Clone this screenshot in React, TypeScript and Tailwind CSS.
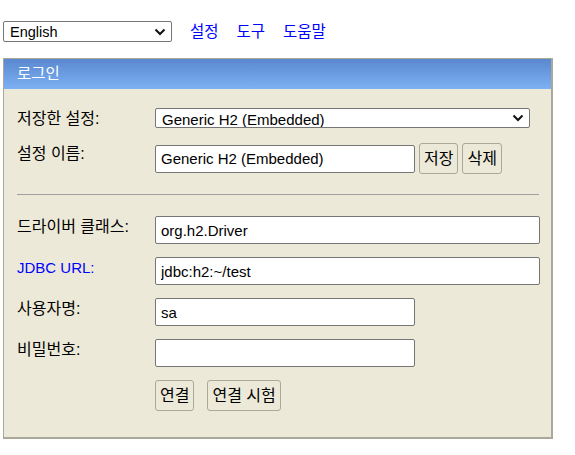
// H2 콘솔 로그인 화면 — 상단 언어/메뉴 + 로그인 패널
import React from "react";

const FONT = { fontFamily: '"Liberation Sans", Arial, "Noto Sans CJK KR", sans-serif' };

function Chevron() {
  return (
    <svg width="12" height="8" viewBox="0 0 12 8" className="pointer-events-none absolute right-[6px] top-1/2 -translate-y-1/2">
      <path d="M1.5 1.5 L6 6 L10.5 1.5" fill="none" stroke="#111" strokeWidth="2" />
    </svg>
  );
}

function Select({ value, className }: { value: string; className: string }) {
  return (
    <div className={`relative ${className}`}>
      <select
        defaultValue={value}
        className="h-full w-full appearance-none rounded-[2px] border border-[#767676] bg-white pl-[6px] text-black outline-none"
      >
        <option>{value}</option>
      </select>
      <Chevron />
    </div>
  );
}

function TextInput({ value = "", wide = false }: { value?: string; wide?: boolean }) {
  return (
    <input
      defaultValue={value}
      className={`h-[28px] shrink-0 ${wide ? "w-[385px]" : "w-[260px]"} rounded-[2px] border border-[#767676] bg-white px-[5px] text-[15px] text-black outline-none`}
    />
  );
}

function Btn({ children }: { children: React.ReactNode }) {
  return (
    <button className="h-[31px] shrink-0 rounded-[3px] border border-[#aca899] bg-[#ece9d8] px-[4px] text-[16px] text-black">
      {children}
    </button>
  );
}

function Row({ label, blue = false, children }: { label: string; blue?: boolean; children: React.ReactNode }) {
  return (
    <div className="flex items-start">
      <div
        className={`w-[138px] shrink-0 leading-[22px] ${blue ? "text-[15px] text-[#0000ff]" : "text-[16px] text-black"}`}
      >
        {label}
      </div>
      <div className="flex items-center">{children}</div>
    </div>
  );
}

export default function App() {
  return (
    <div className="min-h-[455px] bg-white pl-[3px] pt-[21px]" style={FONT}>
      {/* 상단: 언어 선택 + 메뉴 */}
      <div className="flex h-[21px] items-center">
        <Select value="English" className="h-[21px] w-[169px] text-[14.5px]" />
        <div className="ml-[18px] flex gap-[18px] text-[15.5px] leading-[21px] text-[#0000ff]">
          <a>설정</a>
          <a>도구</a>
          <a>도움말</a>
        </div>
      </div>

      {/* 로그인 패널 */}
      <div className="mt-[16px] w-[550px] border border-b-2 border-r-2 border-[#aca899] bg-[#ece9d8] text-[15px]">
        <div className="flex h-[30px] items-center bg-gradient-to-b from-[#5a88d0] to-[#7cb1f3] pl-[13px] text-[15.5px] text-white">
          로그인
        </div>

        <div className="pl-[13px] pt-[19px] pb-[26px]">
          <Row label="저장한 설정:">
            <Select value="Generic H2 (Embedded)" className="h-[20px] w-[375px] text-[15px]" />
          </Row>
          <div className="mt-[13px]">
            <Row label="설정 이름:">
              <TextInput value="Generic H2 (Embedded)" />
              <div className="ml-[4px] flex gap-[4px]">
                <Btn>저장</Btn>
                <Btn>삭제</Btn>
              </div>
            </Row>
          </div>

          <div className="mt-[20px] mb-[21px] h-px w-[522px] bg-[#a0a0a0]" />

          <div className="flex flex-col gap-[13px]">
            <Row label="드라이버 클래스:">
              <TextInput value="org.h2.Driver" wide />
            </Row>
            <Row label="JDBC URL:" blue>
              <TextInput value="jdbc:h2:~/test" wide />
            </Row>
            <Row label="사용자명:">
              <TextInput value="sa" />
            </Row>
            <Row label="비밀번호:">
              <TextInput />
            </Row>
            <Row label="">
              <div className="flex gap-[13px]">
                <Btn>연결</Btn>
                <Btn>연결 시험</Btn>
              </div>
            </Row>
          </div>
        </div>
      </div>
    </div>
  );
}
